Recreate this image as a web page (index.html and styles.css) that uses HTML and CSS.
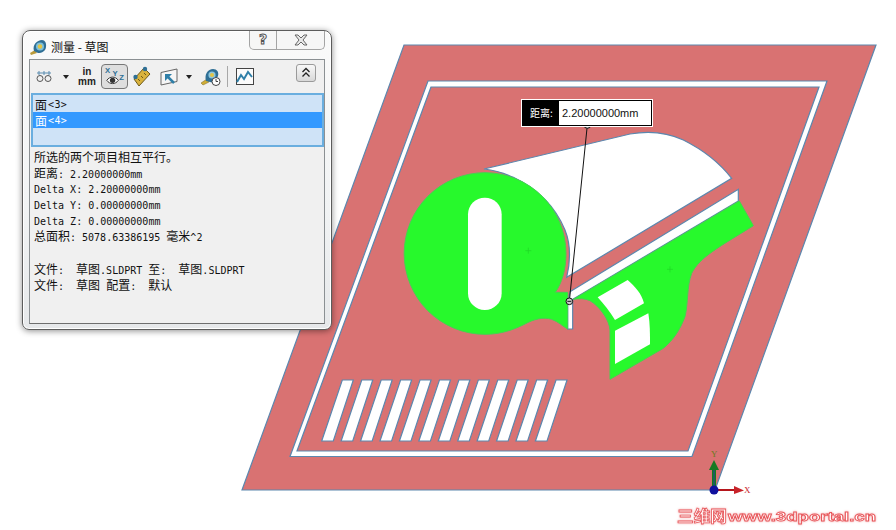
FILE: index.html
```html
<!DOCTYPE html>
<html lang="zh">
<head>
<meta charset="utf-8">
<title>测量 - 草图</title>
<link rel="stylesheet" href="styles.css">
</head>
<body>
<main class="stage">
  <svg class="model" viewBox="0 0 896 530" width="896" height="530" aria-hidden="true">
    <defs>
      <polygon id="stripe" points="342.3,380 353.3,380 333.3,441 321.7,441"/>
    </defs>
    <polygon class="plate" points="404,45 876,45 715,490 242,490"/>
    <path class="cut" fill-rule="evenodd" d="M428 81H827L692 456.500H290ZM431 87L297 451H688L819 87Z"/>
    <g class="cut">
      <use href="#stripe"/>
      <use href="#stripe" x="19.43"/>
      <use href="#stripe" x="38.86"/>
      <use href="#stripe" x="58.29"/>
      <use href="#stripe" x="77.72"/>
      <use href="#stripe" x="97.15"/>
      <use href="#stripe" x="116.58"/>
      <use href="#stripe" x="136.01"/>
      <use href="#stripe" x="155.44"/>
      <use href="#stripe" x="174.87"/>
      <use href="#stripe" x="194.3"/>
      <use href="#stripe" x="213.73"/>
    </g>
    <g transform="translate(400 90) scale(.33333)">
      <path class="cut thick" d="M252 237L690 132C730 125 790 122 850 150C910 180 960 220 995 265L500 562C510 520 515 470 495 420C470 360 420 300 340 262C310 248 280 240 252 237Z"/>
      <path class="cut thick" d="M510 605L1015 298V333L518 628V717H503V640Z"/>
      <path class="face" d="M255 248A242.500 242.500 0 0 0 255 733C300 733 340 720 375 702C400 688 430 680 455 688C475 695 490 710 503 717V607H466C485 580 498 540 498 490A243 243 0 0 0 255 248Z"/>
      <path class="face" d="M1018 333L1060 407C960 470 900 500 875 550C860 590 865 640 855 680C840 720 820 750 790 775L630 868V720C628 690 600 650 570 632C555 625 535 625 520 628Z"/>
      <rect class="hole" x="204" y="323" width="101" height="337" rx="50"/>
      <path class="hole" d="M593 622L683 570C705 590 725 610 732 640L645 690C630 665 610 640 593 622Z"/>
      <path class="hole" d="M645 722L745 670C750 700 750 730 750 763L645 822Z"/>
      <path class="mark" d="M376 482H394M385 473V491M801 538H819M810 529V547"/>
      <path class="dim" d="M562 105L508 634"/>
      <circle class="node" cx="562" cy="105" r="10"/>
      <circle class="node" cx="508" cy="634" r="10"/>
      <path class="dim" d="M556 105H568M502 634H514"/>
    </g>
    <g class="triad">
      <path class="axis-x" d="M714 490H734"/>
      <path class="head-x" d="M734 486L744 490.500L734 494Z"/>
      <path class="axis-y" d="M714 490V470"/>
      <path class="axis-y2" d="M714 490V468"/>
      <path class="head-y" d="M714 460L719 470H709Z"/>
      <circle class="origin" cx="714" cy="490" r="4.500"/>
      <text class="label-y" x="711" y="457">Y</text>
      <text class="label-x" x="744" y="493">X</text>
    </g>
    <g class="watermark">
      <text x="677" y="522" textLength="50" lengthAdjust="spacingAndGlyphs" class="wm-cjk">三维网</text>
      <text x="728" y="521" textLength="148" lengthAdjust="spacingAndGlyphs">www.3dportal.cn</text>
    </g>
  </svg>

  <div class="callout">
    <span class="callout-key">距离:</span>
    <span class="callout-value">2.20000000mm</span>
  </div>

  <section class="dialog">
    <header class="titlebar">
      <svg class="title-icon" viewBox="0 0 18 16" width="18" height="16" aria-hidden="true">
        <path d="M1 14L6 11L8 14L2 16Z" fill="#b99a3a"/>
        <path d="M5 12C3 6 8 1 13 1C16 1 17.500 4 17 8C16.500 12 13 14 9 14Z" fill="#2f6f95"/>
        <circle cx="11" cy="7.500" r="4" fill="#7cc0dc"/>
        <circle cx="11" cy="7.500" r="2.300" fill="#e3c545"/>
      </svg>
      <h1 class="title">测量 - 草图</h1>
      <div class="caption-btns">
        <span class="caption-help">?</span>
        <span class="caption-close">
          <svg viewBox="0 0 16 12" width="16" height="12" aria-hidden="true"><path d="M2 1H5L8 4L11 1H14L10 6L14 11H11L8 8L5 11H2L6 6Z" fill="#e8e8e8" stroke="#666"/></svg>
        </span>
      </div>
    </header>
    <div class="client">
      <div class="toolbar">
        <svg class="tool t-compass" viewBox="0 0 16 11" width="16" height="11" aria-hidden="true">
          <path d="M1 2H15M3 0V4M8 0V4M13 0V4" fill="none" stroke="#5a8cb0"/>
          <circle cx="4" cy="7.500" r="3" fill="none" stroke="#555"/>
          <circle cx="12" cy="7.500" r="3" fill="none" stroke="#555"/>
        </svg>
        <span class="drop d1"></span>
        <span class="units"><b>in</b><b>mm</b></span>
        <span class="pressed">
          <svg viewBox="0 0 26 23" width="26" height="23" aria-hidden="true">
            <text class="xyz" x="3" y="8">X</text>
            <text class="xyz" x="11" y="11">Y</text>
            <text class="xyz" x="18" y="15">Z</text>
            <path d="M5 15.500C8 11 14 11 17 15.500C14 20 8 20 5 15.500Z" fill="#fff" stroke="#333"/>
            <circle cx="11" cy="15.500" r="2.800" fill="#333"/>
          </svg>
        </span>
        <svg class="tool t-ruler" viewBox="0 0 19 21" width="19" height="21" aria-hidden="true">
          <path d="M2 13L12 2L18 8L7 20Z" fill="#d9b23c" stroke="#6d5a1a"/>
          <path d="M6 13L8 15M9 10L11 12M12 7L14 9" stroke="#6d5a1a"/>
          <circle cx="3.500" cy="11" r="2.200" fill="#2f6f95"/>
          <circle cx="13" cy="3" r="2.200" fill="#2f6f95"/>
        </svg>
        <svg class="tool t-frame" viewBox="0 0 18 18" width="18" height="18" aria-hidden="true">
          <path d="M1 4.500L17 1V13.500L1 17Z" fill="#f5f5f5" stroke="#666"/>
          <path d="M14 15L7 8" stroke="#2f7fa8" stroke-width="2.500"/>
          <path d="M5 6H12L5 13Z" fill="#2f7fa8"/>
        </svg>
        <span class="drop d2"></span>
        <svg class="tool t-tape" viewBox="0 0 20 18" width="20" height="18" aria-hidden="true">
          <path d="M0 15L6 11L8 14L2 17Z" fill="#d0ae35" stroke="#7a6620" stroke-width=".5"/>
          <path d="M5 13C3 6 7 1 12 1C16 1 18 4 17 8L13 15Z" fill="#2f6f95"/>
          <circle cx="11" cy="7" r="3.600" fill="#8cc6de"/>
          <circle cx="11" cy="7" r="2" fill="#e3c545"/>
          <circle cx="15" cy="13.500" r="4" fill="#fff" stroke="#444"/>
          <path d="M15 11V13.500H17" fill="none" stroke="#444"/>
        </svg>
        <span class="sep"></span>
        <svg class="tool t-chart" viewBox="0 0 18 17" width="18" height="17" aria-hidden="true">
          <rect x=".5" y=".5" width="17" height="16" fill="#fbfbfb" stroke="#444"/>
          <path d="M1 14L5 7L8 11L12 4L16 9" fill="none" stroke="#2f7fa8" stroke-width="2"/>
        </svg>
        <span class="collapse">
          <svg viewBox="0 0 10 11" width="10" height="11" aria-hidden="true"><path d="M1.500 5L5 1.500L8.500 5M1.500 9.500L5 6L8.500 9.500" fill="none" stroke="#222" stroke-width="1.300"/></svg>
        </span>
      </div>
      <div class="picks">
        <div class="pick"><span class="cjk">面</span><span class="tag">&lt;3&gt;</span></div>
        <div class="pick is-selected"><span class="cjk">面</span><span class="tag">&lt;4&gt;</span></div>
      </div>
      <div class="report">
        <div class="cjk">所选的两个项目相互平行。</div>
        <div><span class="cjk">距离</span>: 2.20000000mm</div>
        <div class="latin">Delta X: 2.20000000mm</div>
        <div class="latin">Delta Y: 0.00000000mm</div>
        <div class="latin">Delta Z: 0.00000000mm</div>
        <div class="tight"><span class="cjk">总面积</span>: 5078.63386195 <span class="cjk">毫米</span>^2</div>
        <div class="blank"></div>
        <div><span class="cjk">文件</span>:  <span class="cjk">草图</span>.SLDPRT <span class="cjk">至</span>:  <span class="cjk">草图</span>.SLDPRT</div>
        <div><span class="cjk">文件</span>:  <span class="cjk">草图</span> <span class="cjk">配置</span>:  <span class="cjk">默认</span></div>
      </div>
    </div>
  </section>
</main>
</body>
</html>
```

FILE: styles.css
```css
* { box-sizing: border-box; }
html, body { margin: 0; padding: 0; background: #fff; }
.stage {
  position: relative;
  width: 896px;
  height: 530px;
  overflow: hidden;
  background: #fff;
  font-family: "DejaVu Sans Mono", "Noto Sans CJK SC", monospace;
}
.model { display: block; }
.plate { fill: #d97272; stroke: #5c87ae; stroke-width: 1.200; }
.cut { fill: #fff; stroke: #5c87ae; stroke-width: 1.200; }
.cut.thick { stroke-width: 3.600; }
.face { fill: #27f92c; stroke: #42d450; stroke-width: 3; }
.hole { fill: #fff; stroke: none; }
.mark { fill: none; stroke: #1fd826; stroke-width: 2; }
.dim { fill: none; stroke: #111; stroke-width: 3; }
.node { fill: #c9c9c9; stroke: #111; stroke-width: 3; }
.axis-x { stroke: #b5161c; stroke-width: 2; }
.head-x { fill: #c8232a; }
.axis-y { stroke: #137a1c; stroke-width: 4; }
.axis-y2 { stroke: #2a3fa0; stroke-width: 1; }
.head-y { fill: #167a22; }
.origin { fill: #10109e; }
.label-y { fill: #6b7a1c; font: 9px "Liberation Serif", serif; }
.label-x { fill: #c8232a; font: 9px "Liberation Serif", serif; }
.watermark text {
  font: bold 13px "Liberation Sans", "Noto Sans CJK SC", sans-serif;
  fill: #fff;
  stroke: #e8585c;
  stroke-width: .8;
}
.watermark { filter: drop-shadow(0 0 1px #f3a9ab); }
.watermark .wm-cjk { font-size: 16px; }

.callout {
  position: absolute;
  left: 521px;
  top: 99px;
  width: 132px;
  height: 28px;
  display: flex;
  background: #000;
  border: 1px solid #000;
  outline: 1px solid #fff;
  outline-offset: -1px;
  padding: 1px;
  font-family: "Liberation Sans", "Noto Sans CJK SC", sans-serif;
}
.callout-key {
  width: 36px;
  padding-left: 7px;
  color: #fff;
  font-size: 10px;
  line-height: 24px;
  font-family: "Noto Sans CJK SC", sans-serif;
  white-space: nowrap;
}
.callout-value {
  flex: 1;
  background: #fff;
  color: #111;
  font-size: 11px;
  line-height: 24px;
  padding-left: 3px;
  white-space: nowrap;
}

.dialog {
  position: absolute;
  left: 22px;
  top: 30px;
  width: 310px;
  height: 300px;
  display: flex;
  flex-direction: column;
  background: linear-gradient(#fafafa, #f1f3f4 60%, #e6e8ea);
  border: 1px solid #5c5c5c;
  border-radius: 8px 8px 7px 7px;
  box-shadow: 0 1px 6px rgba(0, 0, 0, .45), inset 0 0 0 1px #fff;
}
.titlebar {
  height: 28px;
  flex: none;
  display: flex;
  align-items: center;
  padding: 0 6px;
}
.title-icon { flex: none; margin-top: 3px; }
.title {
  margin: 3px 0 0 4px;
  font: 400 12px/16px "Noto Sans CJK SC", sans-serif;
  color: #111;
  white-space: pre;
}
.caption-btns {
  margin-left: auto;
  align-self: flex-start;
  display: flex;
  width: 76px;
  height: 19px;
  border: 1px solid #a4a4a4;
  border-top: 0;
  border-radius: 0 0 5px 5px;
  background: #f6f6f6;
}
.caption-help {
  width: 27px;
  border-right: 1px solid #a4a4a4;
  text-align: center;
  font: bold 14px/17px "DejaVu Sans", sans-serif;
  color: #fff;
  -webkit-text-stroke: 1px #555;
}
.caption-close {
  flex: 1;
  display: flex;
  align-items: center;
  justify-content: center;
}

.client {
  flex: 1;
  margin: 0 6px 5px;
  display: flex;
  flex-direction: column;
  background: #f0f0f0;
  border: 1px solid #8b9093;
  border-bottom-color: #6e6e6e;
  min-height: 0;
}
.toolbar {
  position: relative;
  height: 33px;
  flex: none;
  display: flex;
  align-items: center;
  padding-left: 6px;
}
.tool { flex: none; }
.drop {
  flex: none;
  width: 0;
  height: 0;
  border: 3.500px solid transparent;
  border-top: 4px solid #222;
  border-bottom: 0;
}
.d1 { margin-left: 11px; }
.units {
  margin-left: 8px;
  width: 20px;
  display: flex;
  flex-direction: column;
  align-items: center;
  font: bold 10px/10px "Liberation Sans", sans-serif;
  color: #222;
}
.pressed {
  margin-left: 4px;
  width: 27px;
  height: 25px;
  display: flex;
  align-items: center;
  justify-content: center;
  background: #dedede;
  border: 1px solid #777;
  border-radius: 4px;
}
.xyz { font: bold 8px "Liberation Sans", sans-serif; fill: #2f6f95; }
.t-ruler { margin-left: 4px; }
.t-frame { margin-left: 9px; }
.d2 { margin-left: 8px; }
.t-tape { margin-left: 9px; }
.sep {
  margin-left: 6px;
  width: 1px;
  height: 21px;
  background: #a8a8a8;
}
.t-chart { margin-left: 8px; }
.collapse {
  margin-left: auto;
  margin-right: 8px;
  margin-top: -8px;
  width: 20px;
  height: 18px;
  display: flex;
  align-items: center;
  justify-content: center;
  background: linear-gradient(#f8f8f8, #d8d8d8);
  border: 1px solid #9a9a9a;
  border-radius: 3px;
}

.picks {
  flex: none;
  height: 54px;
  margin: 0 0 0 1px;
  padding: 1px 0;
  background: #cfe3f7;
  border: 2px solid #6aaedf;
}
.pick {
  height: 16px;
  padding-left: 2px;
  display: flex;
  align-items: center;
  color: #111;
}
.pick.is-selected { background: #3399ff; color: #fff; }
.tag { font-size: 10px; margin-left: 1px; letter-spacing: .4px; }
.cjk { font-family: "Noto Sans CJK SC", sans-serif; font-size: 12px; }
.report {
  padding: 2px 4px 0;
  font-size: 10px;
  color: #111;
}
.report > div { height: 16px; line-height: 16px; white-space: pre; }
.report > .latin { padding-top: 1px; }
.report > .tight { margin-top: -1px; margin-bottom: 1px; }
```
